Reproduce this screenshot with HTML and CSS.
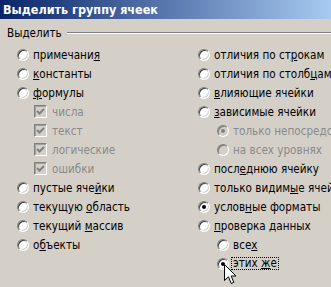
FILE: index.html
```html
<!DOCTYPE html>
<html>
<head>
<meta charset="utf-8">
<link rel="stylesheet" href="styles.css">
</head>
<body>
<div class="win">
  <div class="title">Выделить группу ячеек</div>
  <div class="group-head"><span class="label">Выделить</span><div class="rule"></div></div>
  <div class="cols">
    <div class="col left">
      <div class="row"><span class="radio"></span><span class="txt">примечани<u>я</u></span></div>
      <div class="row"><span class="radio"></span><span class="txt"><u>к</u>онстанты</span></div>
      <div class="row"><span class="radio"></span><span class="txt"><u>ф</u>ормулы</span></div>
      <div class="row ind-l dis"><span class="check"><svg width="11" height="11" viewBox="0 0 11 11"><polyline points="2,5 4.5,7.5 9,3" fill="none" stroke="#808080" stroke-width="2"/></svg></span><span class="txt">числа</span></div>
      <div class="row ind-l dis"><span class="check"><svg width="11" height="11" viewBox="0 0 11 11"><polyline points="2,5 4.5,7.5 9,3" fill="none" stroke="#808080" stroke-width="2"/></svg></span><span class="txt">текст</span></div>
      <div class="row ind-l dis"><span class="check"><svg width="11" height="11" viewBox="0 0 11 11"><polyline points="2,5 4.5,7.5 9,3" fill="none" stroke="#808080" stroke-width="2"/></svg></span><span class="txt">логические</span></div>
      <div class="row ind-l dis"><span class="check"><svg width="11" height="11" viewBox="0 0 11 11"><polyline points="2,5 4.5,7.5 9,3" fill="none" stroke="#808080" stroke-width="2"/></svg></span><span class="txt">ошибки</span></div>
      <div class="row"><span class="radio"></span><span class="txt">пустые яче<u>й</u>ки</span></div>
      <div class="row"><span class="radio"></span><span class="txt">текущую <u>о</u>бласть</span></div>
      <div class="row"><span class="radio"></span><span class="txt">текущий <u>м</u>ассив</span></div>
      <div class="row"><span class="radio"></span><span class="txt">о<u>б</u>ъекты</span></div>
    </div>
    <div class="col right">
      <div class="row"><span class="radio"></span><span class="txt">отличия по ст<u>р</u>окам</span></div>
      <div class="row"><span class="radio"></span><span class="txt">отличия по столб<u>ц</u>ам</span></div>
      <div class="row"><span class="radio"></span><span class="txt"><u>в</u>лияющие ячейки</span></div>
      <div class="row"><span class="radio"></span><span class="txt"><u>з</u>ависимые ячейки</span></div>
      <div class="row ind-r dis"><span class="radio on"></span><span class="txt">только непосредственно</span></div>
      <div class="row ind-r dis"><span class="radio"></span><span class="txt">на всех уровнях</span></div>
      <div class="row"><span class="radio"></span><span class="txt">посл<u>е</u>днюю ячейку</span></div>
      <div class="row"><span class="radio"></span><span class="txt">только видим<u>ы</u>е ячейки</span></div>
      <div class="row"><span class="radio on"></span><span class="txt">услов<u>н</u>ые форматы</span></div>
      <div class="row"><span class="radio"></span><span class="txt"><u>п</u>роверка данных</span></div>
      <div class="row ind-r"><span class="radio"></span><span class="txt">все<u>х</u></span></div>
      <div class="row ind-r"><span class="radio on"></span><span class="txt focus">этих <u>ж</u>е</span></div>
    </div>
  </div>
  <svg class="cursor" width="13" height="21" viewBox="0 0 13 21"><path d="M0.5,0.5 L0.5,16.5 L4.5,12.8 L7.2,19.5 L9.8,18.4 L7.2,12 L12,12 Z" fill="#fff" stroke="#000" stroke-width="1" stroke-linejoin="miter"/></svg>
</div>
</body>
</html>
```

FILE: styles.css
```css
html, body {
  margin: 0;
  padding: 0;
}
body {
  width: 331px;
  height: 287px;
  overflow: hidden;
  background: #d4d0c8;
  font-family: "DejaVu Sans Condensed", "DejaVu Sans", sans-serif;
  font-size: 11.6px;
  color: #000;
}
.win {
  position: relative;
  width: 331px;
  height: 287px;
  overflow: hidden;
}
.title {
  height: 19px;
  line-height: 19px;
  padding-left: 3px;
  background: linear-gradient(to right, #0a246a, #a6caf0);
  color: #fff;
  font-weight: bold;
  font-size: 12.5px;
  white-space: nowrap;
}
.group-head {
  height: 26px;
  display: flex;
  align-items: center;
  padding-left: 7px;
  box-sizing: border-box;
  padding-top: 2px;
}
.label {
  line-height: 14px;
  white-space: nowrap;
}
.rule {
  flex: 1;
  margin-left: 5px;
  height: 0;
  border-top: 1px solid #808080;
  border-bottom: 1px solid #fff;
}
.cols {
  display: grid;
  grid-template-columns: 198px 1fr;
}
.left {
  padding-left: 17px;
}
.col {
  display: flex;
  flex-direction: column;
  min-width: 0;
}
.row {
  height: 19px;
  display: flex;
  align-items: center;
  white-space: nowrap;
}
.ind-l {
  padding-left: 17px;
}
.ind-r {
  padding-left: 19px;
}
.radio {
  flex: none;
  position: relative;
  width: 12px;
  height: 12px;
  box-sizing: border-box;
  border-radius: 50%;
  background: #fff;
  border: 1px solid;
  border-color: #808080 #ffffff #ffffff #808080;
  box-shadow: inset 1px 1px 0 #404040, inset -1px -1px 0 #d4d0c8;
  margin-right: 4px;
}
.radio.on::after {
  content: "";
  position: absolute;
  left: 3px;
  top: 3px;
  width: 4px;
  height: 4px;
  border-radius: 50%;
  background: #000;
}
.dis .radio {
  background: #d4d0c8;
  box-shadow: inset 1px 1px 0 #808080, inset -1px -1px 0 #d4d0c8;
}
.dis .radio.on::after {
  background: #808080;
}
.check {
  flex: none;
  width: 13px;
  height: 13px;
  box-sizing: border-box;
  border: 1px solid;
  border-color: #808080 #ffffff #ffffff #808080;
  box-shadow: inset 1px 1px 0 #a0a0a0;
  background: #d4d0c8;
  margin-right: 5px;
  display: flex;
  align-items: center;
  justify-content: center;
}
.check svg {
  display: block;
}
.dis .txt {
  color: #8a8a8a;
}
.txt u {
  text-decoration: underline;
  text-underline-offset: 1px;
}
.focus {
  border: 1px dotted #000;
  padding: 0 1px;
  margin-left: -2px;
  line-height: 11px;
}
.cursor {
  position: absolute;
  left: 224px;
  top: 264px;
}
```
